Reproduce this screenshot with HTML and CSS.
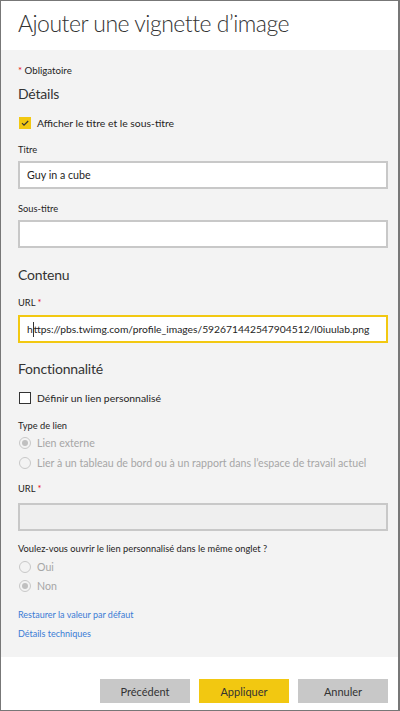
FILE: index.html
```html
<!DOCTYPE html>
<html lang="fr">
<head>
<meta charset="utf-8">
<title>Ajouter une vignette d'image</title>
<link rel="stylesheet" href="styles.css">
</head>
<body>
<div class="dialog">
  <div class="header"><h1 class="title">Ajouter une vignette d’image</h1></div>
  <div class="content">
    <div class="required"><span class="star">*</span> Obligatoire</div>
    <h2 class="section s-details">Détails</h2>
    <div class="check-row r-show">
      <span class="checkbox checked">
        <svg width="12" height="12" viewBox="0 0 12 12"><path d="M3 6.2 L5 8.2 L9.2 4" fill="none" stroke="#333" stroke-width="1.2"/></svg>
      </span>
      <span class="check-label">Afficher le titre et le sous-titre</span>
    </div>
    <div class="label l-titre">Titre</div>
    <div class="input i-titre">Guy in a cube</div>
    <div class="label l-sous">Sous-titre</div>
    <div class="input i-sous"></div>
    <h2 class="section s-contenu">Contenu</h2>
    <div class="label l-url">URL <span class="star">*</span></div>
    <div class="input focused i-url"><span>h</span><span class="caret"></span><span>ttps://pbs.twimg.com/profile_images/592671442547904512/l0iuulab.png</span></div>
    <h2 class="section s-fonc">Fonctionnalité</h2>
    <div class="check-row r-lien">
      <span class="checkbox"></span>
      <span class="check-label">Définir un lien personnalisé</span>
    </div>
    <div class="label l-type">Type de lien</div>
    <div class="radio-row r-ext"><span class="radio on"></span><span class="radio-label">Lien externe</span></div>
    <div class="radio-row r-tab"><span class="radio"></span><span class="radio-label">Lier à un tableau de bord ou à un rapport dans l’espace de travail actuel</span></div>
    <div class="label l-url2">URL <span class="star">*</span></div>
    <div class="input disabled i-url2"></div>
    <div class="label l-onglet">Voulez-vous ouvrir le lien personnalisé dans le même onglet ?</div>
    <div class="radio-row r-oui"><span class="radio"></span><span class="radio-label">Oui</span></div>
    <div class="radio-row r-non"><span class="radio on"></span><span class="radio-label">Non</span></div>
    <a class="link k-rest" href="#">Restaurer la valeur par défaut</a>
    <a class="link k-tech" href="#">Détails techniques</a>
  </div>
  <div class="footer">
    <button class="btn">Précédent</button>
    <button class="btn primary">Appliquer</button>
    <button class="btn">Annuler</button>
  </div>
</div>
</body>
</html>
```

FILE: styles.css
```css
* { box-sizing: border-box; }
html, body { margin: 0; padding: 0; background: #fff; }
body { font-family: Lato, "Open Sans", "Liberation Sans", sans-serif; color: #333; }

.dialog {
  width: 400px;
  height: 711px;
  border: 1px solid #777;
  border-right-width: 2px;
  display: flex;
  flex-direction: column;
  background: #fff;
}

.header { height: 49px; padding-left: 17px; background: #fff; flex: none; }
.title {
  margin: 0;
  font-weight: 300;
  font-size: 23px;
  letter-spacing: -0.5px;
  line-height: 44px;
  color: #333;
}

.content {
  flex: 1;
  background: #f3f3f3;
  padding: 13px 10px 0 17px;
  display: flex;
  flex-direction: column;
  align-items: flex-start;
}

.required { font-size: 9.7px; line-height: 14px; color: #252423; }
.star { color: #e81123; }

.section { margin: 0; font-weight: 400; font-size: 14px; letter-spacing: -0.2px; line-height: 20px; color: #333; }
.s-details { margin-top: 7px; }
.s-contenu { margin-top: 17px; }
.s-fonc { margin-top: 16px; }

.label { font-size: 9.3px; line-height: 14px; color: #252423; }
.l-titre { margin-top: 12px; }
.l-sous { margin-top: 13px; }
.l-url { margin-top: 11px; }
.l-type { margin-top: 13px; }
.l-url2 { margin-top: 11px; }
.l-onglet { margin-top: 11px; }

.input {
  align-self: stretch;
  height: 28px;
  border: 2px solid #c8c8c8;
  background: #fff;
  padding-left: 7px;
  font-size: 10.7px;
  line-height: 24px;
  color: #252423;
  display: flex;
  align-items: center;
  white-space: nowrap;
  overflow: hidden;
}
.i-titre { margin-top: 4px; }
.i-sous { margin-top: 4px; }
.i-url { margin-top: 5px; font-size: 10.3px; }
.i-url2 { margin-top: 7px; }
.input.focused { border-color: #f2c811; }
.input.disabled { background: #efefef; }
.caret { width: 1px; height: 15px; background: #333; display: inline-block; }

.check-row, .radio-row { display: flex; align-items: center; height: 16px; }
.r-show { margin-top: 11px; }
.r-lien { margin-top: 11px; }
.r-ext { margin-top: 2px; }
.r-tab { margin-top: 4px; }
.r-oui { margin-top: 3px; }
.r-non { margin-top: 3px; }

.checkbox {
  width: 12px; height: 12px;
  border: 1px solid #333;
  background: #fff;
  margin-left: 1px;
  display: flex;
}
.checkbox.checked { background: #f2c811; border-color: #f2c811; }
.checkbox svg { margin: -1px; }
.check-label { margin-left: 6px; font-size: 10.4px; color: #252423; }

.radio {
  width: 12px; height: 12px;
  border: 1px solid #c8c8c8;
  border-radius: 50%;
  margin-left: 1px;
  display: flex;
  align-items: center;
  justify-content: center;
}
.radio.on::after {
  content: "";
  width: 6px; height: 6px;
  border-radius: 50%;
  background: #c0c0c0;
}
.radio-label { margin-left: 6px; font-size: 10.6px; color: #a6a6a6; }

.link { font-size: 9px; line-height: 14px; color: #3a7bd5; text-decoration: none; }
.k-rest { margin-top: 14px; }
.k-tech { margin-top: 5px; }

.footer {
  height: 53px;
  flex: none;
  background: #fff;
  display: flex;
  justify-content: flex-end;
  align-items: flex-start;
  gap: 9px;
  padding: 22px 10px 0 0;
}
.btn {
  width: 90px; height: 24px;
  border: none;
  background: #c8c8c8;
  font-family: inherit;
  font-size: 11px;
  color: #333;
  padding: 0;
}
.btn.primary { background: #f2c811; }
```
